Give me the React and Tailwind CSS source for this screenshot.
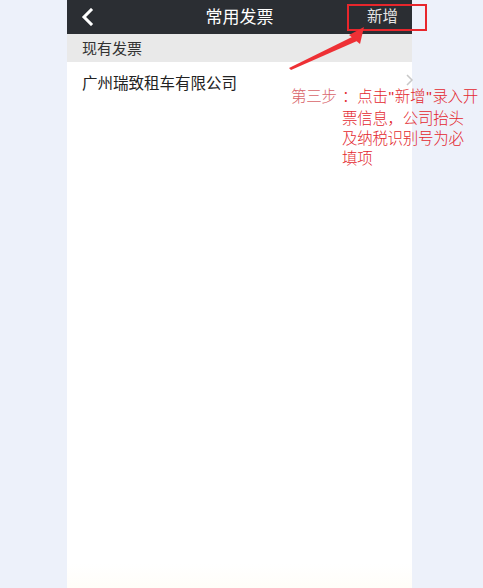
import React from 'react';

const FONT = { fontFamily: '"Noto Sans CJK SC", "Noto Sans", sans-serif' };

function BackIcon() {
  return (
    <svg width="14" height="18" viewBox="0 0 14 18" fill="none">
      <path d="M11 2 L4 9 L11 16" stroke="#ffffff" strokeWidth="3" strokeLinecap="square" />
    </svg>
  );
}

function Q() {
  // narrow straight quote, as in the reference
  return <span className="font-['Liberation_Sans'] px-[1px]">"</span>;
}

function Annotation() {
  return (
    <>
      {/* red frame round the 新增 button */}
      <div className="absolute left-[347px] top-[4px] w-[80px] h-[27px] border-2 border-[#e8262c]" />

      {/* arrow */}
      <svg className="absolute left-0 top-0" width="483" height="120" viewBox="0 0 483 120">
        <polygon points="289,68 291,70 357,41 354,36" fill="#ee3035" />
        <polygon points="364,27 349,35 360,44" fill="#ee3035" />
      </svg>

      {/* step note */}
      <div className="absolute left-[291px] top-[85px] flex whitespace-nowrap text-[15.5px] leading-[20px] tracking-[-0.3px] font-light" style={FONT}>
        <span className="w-[51px] text-[#d9646a]">第三步</span>
        <div className="flex flex-col text-[#e3282f]">
          <span>：点击<Q />新增<Q />录入开</span>
          <span>票信息，公司抬头</span>
          <span>及纳税识别号为必</span>
          <span>填项</span>
        </div>
      </div>
    </>
  );
}

export default function App() {
  return (
    <div className="relative w-[483px] h-[588px] overflow-hidden bg-[#edf1fa]" style={FONT}>
      <div className="ml-[67px] w-[345px] h-[588px] bg-white flex flex-col">
        {/* nav bar */}
        <div className="h-[34px] bg-[#2b2e33] flex items-center px-[13px]">
          <div className="w-[60px] flex items-center">
            <BackIcon />
          </div>
          <div className="flex-1 text-center text-white text-[17px] leading-none pb-[3px]">常用发票</div>
          <div className="w-[60px] flex justify-end pr-[1px] text-[15.5px] leading-none text-[#e4e4e4] pb-[3px]">新增</div>
        </div>

        {/* section header */}
        <div className="h-[28px] bg-[#e9e9e9] flex items-center px-[15px] text-[15px] text-[#333333]">
          现有发票
        </div>

        {/* invoice row */}
        <div className="h-[42px] flex items-center justify-between pl-[15px] pr-0 text-[15.5px] text-[#222222]">
          <span className="pb-[1px]">广州瑞致租车有限公司</span>
          <svg width="9" height="14" viewBox="0 0 9 14" className="mr-[-2px] mb-[6px]">
            <path d="M2 2 L7 7 L2 12" stroke="#c8c8c8" strokeWidth="1.5" fill="none" />
          </svg>
        </div>

        <div className="flex-1 bg-gradient-to-b from-white from-95% to-[#fffdf8]" />
      </div>

      <Annotation />
    </div>
  );
}
